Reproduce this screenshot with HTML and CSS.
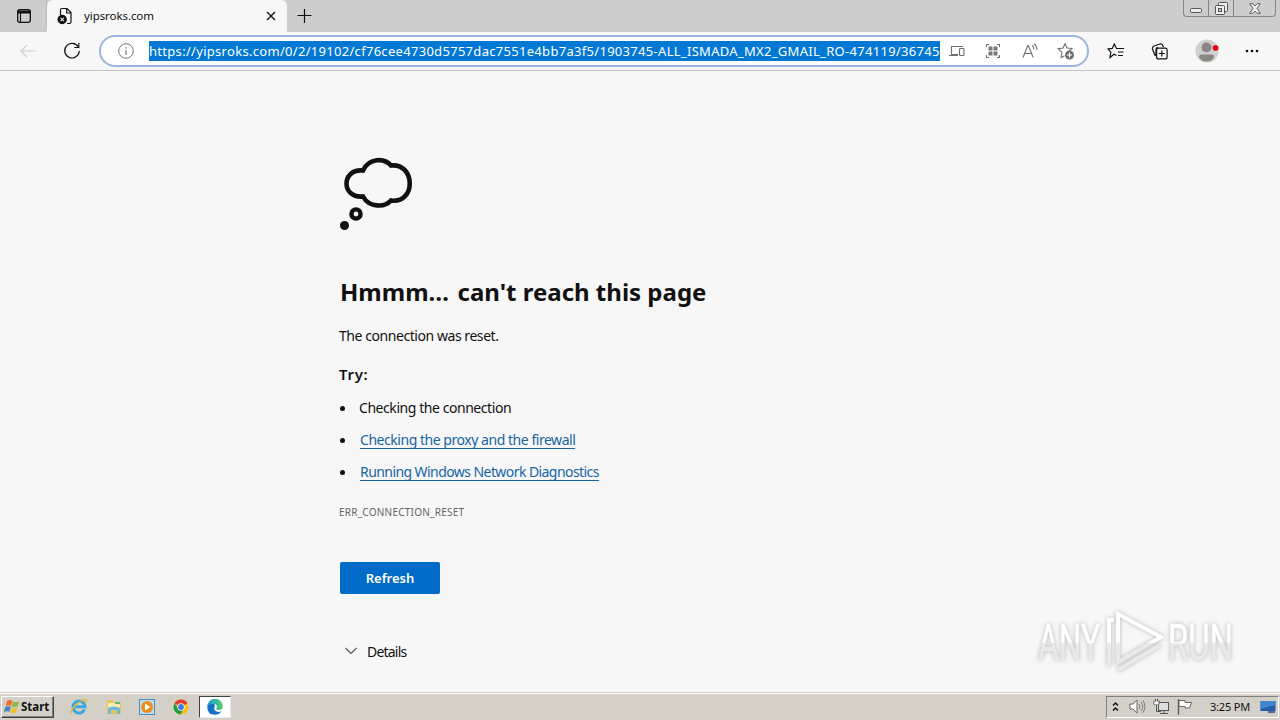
FILE: index.html
```html
<!DOCTYPE html>
<html lang="en">
<head>
<meta charset="utf-8">
<title>yipsroks.com</title>
<link rel="stylesheet" href="styles.css">
</head>
<body>
<div class="screen">
  <header class="tabstrip">
    <div class="tab-actions">
      <svg width="16" height="16" viewBox="0 0 16 16"><rect x="1.700" y="1.700" width="12.600" height="12.600" rx="2" fill="none" stroke="#111" stroke-width="1.300"/><path d="M1.500 2.500h13v3h-13z" fill="#111"/><path d="M4.500 5v9" stroke="#111" stroke-width="1.100"/></svg>
    </div>
    <div class="tab">
      <svg class="favicon" width="16" height="18" viewBox="0 0 16 18"><path d="M3.500 8V3q0-1.500 1.500-1.500h5l4 4V15q0 1.500-1.500 1.500H10M9.700 1.500V6h4.300" fill="none" stroke="#111" stroke-width="1.200"/><circle cx="5.200" cy="12.500" r="4.700" fill="#111"/><path d="M3.500 10.800l3.400 3.400m0-3.400l-3.400 3.400" stroke="#eee" stroke-width="1.100"/></svg>
      <span class="tab-title">yipsroks.com</span>
      <svg class="tab-close" width="10" height="10" viewBox="0 0 10 10"><path d="M1 1l8 8M9 1L1 9" stroke="#111" stroke-width="1.400"/></svg>
    </div>
    <svg class="new-tab" width="16" height="16" viewBox="0 0 16 16"><path d="M7.500 1v14M.5 7.500h14" stroke="#111" stroke-width="1.200"/></svg>
    <div class="window-buttons">
      <span class="wb"><svg width="12" height="5" viewBox="0 0 12 5"><rect x=".5" y=".5" width="11" height="4" rx="1" fill="#eee" stroke="#555"/></svg></span>
      <span class="wb"><svg width="13" height="13" viewBox="0 0 13 13"><rect x="3.500" y=".5" width="9" height="9" rx="1" fill="#eee" stroke="#555"/><rect x=".5" y="3.500" width="9" height="9" rx="1" fill="#eee" stroke="#555"/><rect x="3.500" y="6.500" width="3" height="3" fill="#ccc" stroke="#555"/></svg></span>
      <span class="wb wide"><svg width="12" height="11" viewBox="0 0 12 11"><path d="M.7.700h3.200L6 3 8.100.700h3.200L8 5.500l3.300 4.800H8.100L6 8l-2.100 2.300H.7L4 5.500z" fill="#eee" stroke="#555" stroke-width=".9"/></svg></span>
    </div>
  </header>

  <nav class="toolbar">
    <svg class="back" width="16" height="14" viewBox="0 0 16 14"><path d="M7 1L1 7l6 6M1 7h15" fill="none" stroke="#cfcfcf" stroke-width="1.200"/></svg>
    <svg class="reload" width="18" height="18" viewBox="0 0 18 18"><path d="M15.200 4.800A7.300 7.300 0 1 0 16.300 9M15.800 1v4.500h-4.500" fill="none" stroke="#111" stroke-width="1.200"/></svg>
    <div class="address">
      <svg class="info" width="16" height="16" viewBox="0 0 16 16"><circle cx="8" cy="8" r="7.300" fill="none" stroke="#777"/><path d="M8 7v5M8 4v1.400" stroke="#777" stroke-width="1.200"/></svg>
      <span class="url"><span class="url-text">https://yipsroks.com/0/2/19102/cf76cee4730d5757dac7551e4bb7a3f5/1903745-ALL_ISMADA_MX2_GMAIL_RO-474119/36745</span></span>
      <svg class="devices" width="16" height="12" viewBox="0 0 16 12"><path d="M9 9.500H2.500V1.500H14M0 10.500h9" fill="none" stroke="#707070" stroke-width="1.100"/><rect x="10.500" y="3.500" width="4.500" height="7" rx=".8" fill="#fff" stroke="#707070" stroke-width="1.100"/></svg>
      <svg class="apps" width="16" height="16" viewBox="0 0 16 16"><path d="M1.500 4V1.500H4M12 1.500h2.500V4M14.500 12v2.500H12M4 14.500H1.500V12" fill="none" stroke="#707070" stroke-width="1.100"/><path d="M3.500 3.500h4v4h-4zM8.500 3.500h4v4h-4zM3.500 8.500h4v4h-4zM8.500 8.500h4v4h-4z" fill="#777"/></svg>
      <svg class="read" width="16" height="16" viewBox="0 0 16 16"><path d="M1 14.500L5.800 2.500h.6l4.800 12M2.700 10.500h6.800M10 2.300q2 1.500 1.800 4.200M12 .7q3.200 2.300 2.800 6.300" fill="none" stroke="#707070" stroke-width="1.100"/></svg>
      <svg class="fav-add" width="18" height="18" viewBox="0 0 18 18"><path d="M8 1.500l2 4.500 5 .5-3.700 3.400M4 15.800l.9-5.400L1.200 6.600l4.900-.6L8 1.500M4 15.800l3.500-2" fill="none" stroke="#707070" stroke-width="1.100"/><circle cx="12.500" cy="13" r="4.500" fill="#707070"/><path d="M12.500 10.500v5M10 13h5" stroke="#fff"/></svg>
    </div>
    <svg class="favorites" width="18" height="16" viewBox="0 0 18 16"><path d="M9.500 12.500L7 11.300 3 14.500l.8-5.300L1 6l4.200-.6L7.300 1l2.200 4.500H17M11 9h5.500M11 12.500h5" fill="none" stroke="#111" stroke-width="1.200"/></svg>
    <svg class="collections" width="18" height="17" viewBox="0 0 18 17"><path d="M4 12.500L1.500 6Q1 4 3 3l6-2q2-.5 2.800 1.500L12.500 4M5 13V6.500Q5 4.500 7 4.500" fill="none" stroke="#111" stroke-width="1.200"/><rect x="5.600" y="5.100" width="10.500" height="10.800" rx="2" fill="#f7f7f7" stroke="#111" stroke-width="1.200"/><path d="M10.800 7.500v6M7.800 10.500h6" stroke="#111" stroke-width="1.200"/></svg>
    <svg class="profile" width="24" height="24" viewBox="0 0 24 24"><circle cx="12" cy="12" r="11.500" fill="#d0d0d0"/><circle cx="11.500" cy="8.500" r="5" fill="#8b8784"/><path d="M4 18q0-2.500 2.500-2.500h10Q19 15.500 19 18q-2 4.500-7.500 4.500T4 18" fill="#8b8784"/><circle cx="20.500" cy="9" r="3.600" fill="#f7f7f7"/><circle cx="20.500" cy="9" r="3" fill="#d90b1c"/></svg>
    <svg class="more" width="14" height="4" viewBox="0 0 14 4"><circle cx="2" cy="2" r="1.300"/><circle cx="7" cy="2" r="1.300"/><circle cx="12" cy="2" r="1.300"/></svg>
  </nav>

  <main class="page">
    <svg class="cloud" width="74" height="74" viewBox="0 0 74 74"><path d="M23 13.500C29 .5 44.500.9 51 8.500C76 6 76 47 51 43.500C44.500 50.800 29 50.500 23 39.500C1 41.500 1 11.500 23 13.500Z" fill="none" stroke="#111" stroke-width="4.600"/><circle cx="16" cy="57" r="4.600" fill="none" stroke="#111" stroke-width="4.400"/><circle cx="4.500" cy="68.500" r="4.500" fill="#111"/></svg>
    <h1><span class="heading-text">Hmmm<span class="dots">…</span> can't reach this page</span></h1>
    <p class="reason"><span>The connection was reset.</span></p>
    <p class="try"><span>Try:</span></p>
    <ul class="tips">
      <li><span class="tip-a">Checking the connection</span></li>
      <li><a class="tip-b">Checking the proxy and the firewall</a></li>
      <li><a class="tip-c">Running Windows Network Diagnostics</a></li>
    </ul>
    <p class="code"><span>ERR_CONNECTION_RESET</span></p>
    <div class="refresh"><span>Refresh</span></div>
    <div class="details"><svg width="12" height="8" viewBox="0 0 12 8"><path d="M.5 1L6 6.500 11.500 1" fill="none" stroke="#555" stroke-width="1.100"/></svg><span>Details</span></div>
    <svg class="watermark" width="230" height="75" viewBox="0 0 230 75">
      <defs><linearGradient id="wm" gradientUnits="userSpaceOnUse" x1="0" y1="0" x2="0" y2="66"><stop offset=".52" stop-color="#fff"/><stop offset=".54" stop-color="#e9e9e9"/></linearGradient></defs>
      <g fill="url(#wm)" stroke="url(#wm)" stroke-width=".6" font-size="50"><text x="2" y="52" textLength="62" lengthAdjust="spacingAndGlyphs">ANY</text><text x="132" y="52" textLength="65" lengthAdjust="spacingAndGlyphs">RUN</text></g>
      <path d="M82 6v48L125 29zM78 12H73v46M82 62l42-25" fill="none" stroke="url(#wm)" stroke-width="4"/>
    </svg>
  </main>

  <footer class="taskbar">
    <div class="start"><svg width="16" height="16" viewBox="0 0 16 16"><path d="M3 2q3-2 5.500 0L7 7.200Q4.500 5.500 1.500 7z" fill="#ed6b2b"/><path d="M9.300 2.400q3 1.500 6-.2L13.800 7q-3 2-6 .5z" fill="#8bb943"/><path d="M1.300 8q3-1.500 5.500 0l-1.500 5Q3 11.500 0 13z" fill="#4384c7"/><path d="M7.500 8.400q3 1.500 6 0L12 13.500q-3 1.500-6 0z" fill="#f3bd37"/></svg><span>Start</span></div>
    <div class="launch">
      <svg width="18" height="18" viewBox="0 0 18 18"><path d="M14.500 11.500A6 6 0 1 1 15 8.700H4" fill="none" stroke="#3ca8df" stroke-width="3"/><path d="M2 16Q-1 14 5 8 13 0 16 2q1 1-.5 3" fill="none" stroke="#e9b72d" stroke-width="1.300"/></svg>
      <svg width="16" height="16" viewBox="0 0 16 16"><path d="M1 3V1h6l1 2h7v12H1z" fill="#e5c45c"/><path d="M2 4h12v5H2z" fill="#fbeeb0"/><path d="M9 3h5v2H9z" fill="#69b466"/><path d="M2 15V9q6-3 12 0v6h-3v-4H5v4z" fill="#6cb9df"/></svg>
      <svg width="16" height="16" viewBox="0 0 16 16"><rect x=".5" y=".5" width="15" height="15" fill="#b9ddf3" stroke="#4a8cc0"/><circle cx="8" cy="8" r="6" fill="#f08a18"/><path d="M6 4.500v7L11.500 8z" fill="#fff"/></svg>
      <svg width="16" height="16" viewBox="0 0 16 16"><circle cx="8" cy="8" r="7.500" fill="#fbc116"/><path d="M8 8L1.500 4.250A7.500 7.500 0 0 1 14.500 4.250z" fill="#e33b2e"/><path d="M1.500 4.250A7.500 7.500 0 0 0 7.500 15.500L11 9.500 8 8 5 9z" fill="#24994a"/><circle cx="8" cy="8" r="3.700" fill="#fff"/><circle cx="8" cy="8" r="2.900" fill="#397ee8"/></svg>
      <div class="active-app"><svg width="16" height="16" viewBox="0 0 16 16"><defs><linearGradient id="edge"><stop stop-color="#159ad8"/><stop offset="1" stop-color="#51cf6c"/></linearGradient></defs><path d="M.3 7.500Q0 15.700 8 15.800q4 0 6.500-3.500-3 1.300-5.500 0Q6.500 11 7.500 8 9 5 5.500 4.500 1 4.500.3 7.500z" fill="#1470c4"/><path d="M.3 7.500A7.700 7.700 0 0 1 15.800 7.500q0 3.500-4 3.500-3.200 0-2.300-1.800Q11 4.700 6 4.700 2 4.700.3 7.500z" fill="url(#edge)"/></svg></div>
    </div>
    <div class="tray">
      <svg width="7" height="11" viewBox="0 0 7 11"><path d="M1 4.500l2.500-2.500L6 4.500M1 9.500L3.500 7 6 9.500" fill="none" stroke="#111" stroke-width="1.500"/></svg>
      <svg class="sound" width="18" height="15" viewBox="0 0 18 15"><path d="M1 5h3l4-4v13l-4-4H1z" fill="#fff" stroke="#666"/><path d="M10 5q2 2.500 0 5M12 3q3.500 4.500 0 9M14 1.500q4 6 0 12" fill="none" stroke="#777"/></svg>
      <svg class="net" width="17" height="16" viewBox="0 0 17 16"><rect x="5.500" y="3.500" width="10" height="8" fill="#ddd" stroke="#555"/><path d="M1 1.500v4h5v-4M3.500 5v7.500H8M2.500 0v3M4.500 0v3M7 14.500h8M11 12v2" fill="none" stroke="#555"/><path d="M1.500 2.500h4v3h-4z" fill="#fff"/></svg>
      <svg class="flag" width="16" height="16" viewBox="0 0 16 16"><path d="M1.500 0v15.500" stroke="#555" stroke-width="1.300"/><path d="M2 1.500h6v2h6.500L12.500 9H8V7.500H2z" fill="#fff" stroke="#666"/></svg>
      <span class="clock">3:25 PM</span>
      <svg class="desktop" width="16" height="14" viewBox="0 0 16 14"><path d="M.5 1h15v10H.5z" fill="#285ca9"/><path d="M.5 1h15v4L.5 9z" fill="#4185d0"/><path d="M8 12h7" stroke="#244a83" stroke-width="1.500"/></svg>
    </div>
  </footer>
</div>
</body>
</html>
```

FILE: styles.css
```css
* { box-sizing: border-box; }
body { margin: 0; font-family: "Noto Sans", sans-serif; color: #111; }
h1, p, ul { margin: 0; padding: 0; }
svg { display: block; flex: none; }
span, a { white-space: nowrap; }
.screen { width: 1280px; height: 720px; display: flex; flex-direction: column; background: #f7f7f7; overflow: hidden; }

.tabstrip { height: 32px; flex: none; display: flex; background: #cdcdcd; }
.tab-actions { width: 47px; padding: 8px 0 0 16px; border-right: 1px solid #bcbcbc; border-radius: 0 0 6px 0; }
.tab { width: 240px; height: 32px; display: flex; align-items: center; background: #f7f7f7; border-radius: 6px 6px 0 0; padding-left: 10px; }
.tab-title { width: 170px; margin-left: 11px; padding-bottom: 1px; font-size: 11.5px; letter-spacing: -.08px; }
.tab-close { margin-left: 12px; }
.new-tab { margin: 8px 0 0 10px; }
.window-buttons { display: flex; margin-left: auto; margin-right: 4px; height: 17px; border: 1px solid #858585; border-top: 0; border-radius: 0 0 4px 4px; }
.wb { width: 25px; display: flex; align-items: center; justify-content: center; border-right: 1px solid #858585; }
.wb:first-child { padding-top: 4px; }
.wide { width: 41px; border-right: 0; }

.toolbar { height: 39px; flex: none; display: flex; align-items: center; border-bottom: 1px solid #c4c4c4; padding-left: 20px; }
.reload { margin-left: 27px; }
.address { width: 990px; height: 32px; margin-left: 18px; display: flex; align-items: center; background: #fff; border: 2px solid #9db5dc; border-radius: 16px; padding-left: 17px; }
.url { width: 791px; height: 20px; margin-left: 15px; overflow: hidden; background: #0078d4; color: #fff; font-size: 13px; line-height: 20px; letter-spacing: .3px; }
.devices { margin-left: 9px; }
.apps { margin-left: 20px; }
.read { margin-left: 21px; }
.fav-add { margin-left: 19px; }
.favorites { margin-left: 18px; }
.collections { margin-left: 26px; }
.profile { margin-left: 26px; }
.more { margin-left: 26px; }

.page { flex: 1; display: flex; flex-direction: column; align-items: flex-start; padding: 86px 0 0 340px; background: #f7f7f7; position: relative; }
.cloud { margin-bottom: 43px; }
h1 { font-size: 24px; line-height: 36px; font-weight: 700; }
.dots { letter-spacing: 2.2px; }
.reason { margin-top: 16px; font-size: 14px; line-height: 20px; margin-left: -1px; letter-spacing: -.44px; }
.try { margin-top: 18px; margin-left: -1px; font-size: 15px; line-height: 20px; font-weight: 600; letter-spacing: .7px; }
.tips { list-style: none; margin-top: 8px; }
.tips li { height: 32px; display: flex; align-items: center; font-size: 14px; line-height: 17px; }
.tips li::before { content: ""; width: 5px; height: 5px; border-radius: 50%; background: #111; margin-right: 15px; }
.tips span { letter-spacing: -.44px; margin: -1px 0 0 -1px; }
.tips a { color: #1565a5; border-bottom: 1px solid #1565a5; }
.tip-b { letter-spacing: -.46px; }
.tip-c { letter-spacing: -.57px; }
.code { margin-top: 16px; margin-left: -1px; font-size: 10px; line-height: 16px; color: #666; letter-spacing: .23px; }
.refresh { margin-top: 42px; width: 100px; height: 32px; border-radius: 2px; background: #006cc7; color: #fff; display: flex; align-items: center; justify-content: center; font-size: 13px; font-weight: 600; }
.details { margin: 47px 0 0 5px; height: 20px; display: flex; align-items: center; gap: 10px; font-size: 14px; letter-spacing: -.8px; }
.watermark { position: absolute; left: 1036px; top: 537px; font-family: Roboto, sans-serif; filter: drop-shadow(0 0 2px #b5b5b5); }

.taskbar { height: 28px; flex: none; display: flex; align-items: center; background: #d4d0c8; border-top: 1px solid #d4d0c8; box-shadow: inset 0 1px #fff; }
.start { width: 53px; height: 22px; margin-left: 1px; display: flex; align-items: center; gap: 1px; border: 1px solid; border-color: #fff #404040 #404040 #fff; box-shadow: inset -1px -1px #808080; padding-left: 2px; font-size: 11.5px; font-weight: 700; }
.launch { display: flex; align-items: center; margin-left: 16px; gap: 17.5px; }
.active-app { width: 32px; height: 22px; display: flex; align-items: center; justify-content: center; background: #fff; border: 1px solid; border-color: #404040 #eee #eee #404040; margin-left: -7px; }
.tray { width: 173px; height: 22px; margin-left: auto; margin-right: 1px; display: flex; align-items: center; border: 1px solid; border-color: #808080 #fff #fff #808080; padding-left: 5px; }
.sound { margin-left: 10px; }
.net { margin-left: 6px; }
.flag { margin-left: 7px; }
.clock { width: 40px; margin-left: 17px; font-size: 11px; letter-spacing: -.2px; }
.desktop { margin-left: 10px; }
```
